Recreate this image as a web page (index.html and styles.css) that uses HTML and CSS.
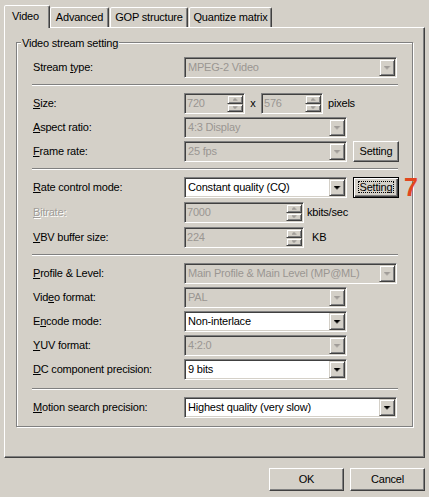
FILE: index.html
```html
<!DOCTYPE html>
<html>
<head>
<meta charset="utf-8">
<link rel="stylesheet" href="styles.css">
</head>
<body>
<div class="dialog">
  <div class="tabs">
    <div class="tab tab-active w-video">Video</div>
    <div class="tab w-adv">Advanced</div>
    <div class="tab w-gop">GOP structure</div>
    <div class="tab w-quant">Quantize matrix</div>
  </div>
  <div class="panel">
    <div class="group">
      <span class="legend">Video stream setting</span>

      <div class="section">
        <div class="row">
          <span class="lbl">Stream <u>t</u>ype:</span>
          <div class="combo wide off"><span class="val">MPEG-2 Video</span><span class="drop"></span></div>
        </div>
      </div>
      <div class="sep"></div>

      <div class="section">
        <div class="row">
          <span class="lbl"><u>S</u>ize:</span>
          <div class="edit w-size1 off"><span class="val">720</span><span class="updown"><span class="ud up"></span><span class="ud down"></span></span></div>
          <span class="times">x</span>
          <div class="edit w-size2 off"><span class="val">576</span><span class="updown"><span class="ud up"></span><span class="ud down"></span></span></div>
          <span class="unit u-pixels">pixels</span>
        </div>
        <div class="row">
          <span class="lbl"><u>A</u>spect ratio:</span>
          <div class="combo narrow off"><span class="val">4:3 Display</span><span class="drop"></span></div>
        </div>
        <div class="row">
          <span class="lbl"><u>F</u>rame rate:</span>
          <div class="combo narrow off"><span class="val">25 fps</span><span class="drop"></span></div>
          <button class="btn btn-small">Setting</button>
        </div>
      </div>
      <div class="sep"></div>

      <div class="section loose">
        <div class="row">
          <span class="lbl"><u>R</u>ate control mode:</span>
          <div class="combo narrow"><span class="val">Constant quality (CQ)</span><span class="drop"></span></div>
          <button class="btn btn-small btn-default"><span class="focus">Setting</span></button>
        </div>
        <div class="row">
          <span class="lbl dim"><u>B</u>itrate:</span>
          <div class="edit w-rate off"><span class="val">7000</span><span class="updown"><span class="ud up"></span><span class="ud down"></span></span></div>
          <span class="unit u-kbits">kbits/sec</span>
        </div>
        <div class="row">
          <span class="lbl"><u>V</u>BV buffer size:</span>
          <div class="edit w-rate off"><span class="val">224</span><span class="updown"><span class="ud up"></span><span class="ud down"></span></span></div>
          <span class="unit u-kb">KB</span>
        </div>
      </div>
      <div class="sep"></div>

      <div class="section">
        <div class="row">
          <span class="lbl"><u>P</u>rofile &amp; Level:</span>
          <div class="combo wide off"><span class="val">Main Profile &amp; Main Level (MP@ML)</span><span class="drop"></span></div>
        </div>
        <div class="row">
          <span class="lbl">Vid<u>e</u>o format:</span>
          <div class="combo narrow off"><span class="val">PAL</span><span class="drop"></span></div>
        </div>
        <div class="row">
          <span class="lbl">E<u>n</u>code mode:</span>
          <div class="combo narrow"><span class="val">Non-interlace</span><span class="drop"></span></div>
        </div>
        <div class="row">
          <span class="lbl"><u>Y</u>UV format:</span>
          <div class="combo narrow off"><span class="val">4:2:0</span><span class="drop"></span></div>
        </div>
        <div class="row">
          <span class="lbl"><u>D</u>C component precision:</span>
          <div class="combo narrow"><span class="val">9 bits</span><span class="drop"></span></div>
        </div>
      </div>
      <div class="sep sep-last"></div>

      <div class="section">
        <div class="row">
          <span class="lbl"><u>M</u>otion search precision:</span>
          <div class="combo wide"><span class="val">Highest quality (very slow)</span><span class="drop"></span></div>
        </div>
      </div>
    </div>
  </div>
  <div class="buttons">
    <button class="btn">OK</button>
    <button class="btn">Cancel</button>
  </div>
</div>
<span class="marker">7</span>
</body>
</html>
```

FILE: styles.css
```css
html, body {
  margin: 0;
  background: #d4d0c8;
}
body {
  font-family: "Liberation Sans", Arial, sans-serif;
  font-size: 11px;
  line-height: 13px;
  letter-spacing: -0.2px;
  color: #000;
  width: 429px;
  height: 497px;
  overflow: hidden;
}
.dialog {
  box-sizing: border-box;
  width: 429px;
  height: 497px;
  padding-top: 5px;
}

/* tabs */
.tabs {
  position: relative;
  z-index: 1;
  display: flex;
  align-items: flex-end;
  height: 22px;
  margin-left: 4px;
}
.tab {
  box-sizing: border-box;
  height: 20px;
  padding-top: 3px;
  margin-right: 1px;
  text-align: center;
  white-space: nowrap;
  background: #d4d0c8;
  border: 1px solid;
  border-bottom: 0;
  border-color: #fff #404040 transparent #fff;
  border-radius: 2px 2px 0 0;
  box-shadow: inset -1px 0 #808080;
}
.tab-active {
  height: 23px;
  margin-bottom: -1px;
  margin-right: 0;
  padding-top: 4px;
  padding-left: 7px;
  text-align: left;
}
.w-video { width: 46px; }
.w-adv { width: 59px; }
.w-gop { width: 78px; }
.w-quant { width: 83px; }

/* panel */
.panel {
  box-sizing: border-box;
  width: 421px;
  height: 431px;
  margin-left: 4px;
  padding: 14px 0 0 11px;
  border: 1px solid;
  border-color: #fff #404040 #404040 #fff;
  box-shadow: inset -1px -1px #808080;
}
.group {
  position: relative;
  box-sizing: border-box;
  width: 397px;
  height: 385px;
  padding: 14px 14px 0 15px;
  border: 1px solid #808080;
  box-shadow: inset 1px 1px #fff, 1px 1px #fff;
}
.legend {
  position: absolute;
  top: -6px;
  left: 4px;
  padding: 0 1px;
  background: #d4d0c8;
}

.section {
  display: flex;
  flex-direction: column;
  gap: 3px;
}
.section.loose { gap: 4px; }
.sep {
  border-top: 1px solid #808080;
  border-bottom: 1px solid #fff;
  margin: 6px 0 7px;
}
.sep-last { margin-top: 8px; }

.row {
  display: flex;
  align-items: center;
  height: 21px;
}
.lbl {
  flex: none;
  width: 152px;
  padding-left: 1px;
  box-sizing: border-box;
  white-space: nowrap;
}
.dim {
  color: #a09c98;
  text-shadow: 1px 1px #fff;
}

/* sunken fields */
.combo, .edit {
  flex: none;
  box-sizing: border-box;
  height: 21px;
  display: flex;
  align-items: center;
  padding: 1px;
  background: #fff;
  border: 1px solid;
  border-color: #808080 #fff #fff #808080;
  box-shadow: inset 1px 1px #404040, inset -1px -1px #d4d0c8;
}
.off {
  background: #d4d0c8;
  color: #9a9692;
}
.wide { width: 213px; }
.narrow { width: 163px; }
.w-size1 { width: 61px; }
.w-size2 { width: 62px; }
.w-rate { width: 120px; }

.val {
  flex: 1;
  min-width: 0;
  padding-left: 2px;
  line-height: 17px;
  white-space: nowrap;
  overflow: hidden;
}
.edit .val { padding-left: 1px; }

.drop, .ud {
  box-sizing: border-box;
  display: flex;
  align-items: center;
  justify-content: center;
  background: #d4d0c8;
  border: 1px solid;
  border-color: #d4d0c8 #404040 #404040 #d4d0c8;
  box-shadow: inset 1px 1px #fff, inset -1px -1px #808080;
}
.drop {
  flex: none;
  width: 16px;
  height: 17px;
}
.drop::after {
  content: "";
  width: 7px;
  height: 4px;
  background: #000;
  clip-path: polygon(0 0, 7px 0, 7px 1px, 6px 1px, 6px 2px, 5px 2px, 5px 3px, 4px 3px, 4px 4px, 3px 4px, 3px 3px, 2px 3px, 2px 2px, 1px 2px, 1px 1px, 0 1px);
}
.off .drop::after { background: #a09c98; }

.updown {
  flex: none;
  width: 16px;
  height: 17px;
  display: flex;
  flex-direction: column;
}
.ud { flex: 1; }
.ud::after {
  content: "";
  width: 5px;
  height: 3px;
  background: #a09c98;
}
.up::after {
  clip-path: polygon(2px 0, 3px 0, 3px 1px, 4px 1px, 4px 2px, 5px 2px, 5px 3px, 0 3px, 0 2px, 1px 2px, 1px 1px, 2px 1px);
}
.down::after {
  clip-path: polygon(0 0, 5px 0, 5px 1px, 4px 1px, 4px 2px, 3px 2px, 3px 3px, 2px 3px, 2px 2px, 1px 2px, 1px 1px, 0 1px);
}

.times {
  flex: none;
  width: 16px;
  text-align: center;
}
.u-pixels { margin-left: 5px; }
.u-kbits { margin-left: 3px; }
.u-kb { margin-left: 8px; }

/* buttons */
.btn {
  box-sizing: border-box;
  width: 75px;
  height: 23px;
  padding: 0;
  font: inherit;
  letter-spacing: inherit;
  color: #000;
  background: #d4d0c8;
  border: 1px solid;
  border-color: #fff #404040 #404040 #fff;
  box-shadow: inset -1px -1px #808080;
}
.btn-small {
  flex: none;
  width: 46px;
  height: 21px;
  margin-left: 6px;
}
.btn-default {
  border-color: #000;
  box-shadow: inset 1px 1px #fff, inset -1px -1px #404040, inset -2px -2px #808080;
}
.focus {
  display: inline-block;
  padding: 0 1px;
  line-height: 10px;
  border: 1px dotted #000;
}
.buttons {
  display: flex;
  justify-content: flex-end;
  gap: 6px;
  margin: 10px 4px 0 0;
}

.marker {
  position: absolute;
  left: 404px;
  top: 175px;
  font-family: "Liberation Sans", Arial, sans-serif;
  font-weight: bold;
  font-size: 25px;
  line-height: 25px;
  letter-spacing: 0;
  color: #e2461f;
}
```
